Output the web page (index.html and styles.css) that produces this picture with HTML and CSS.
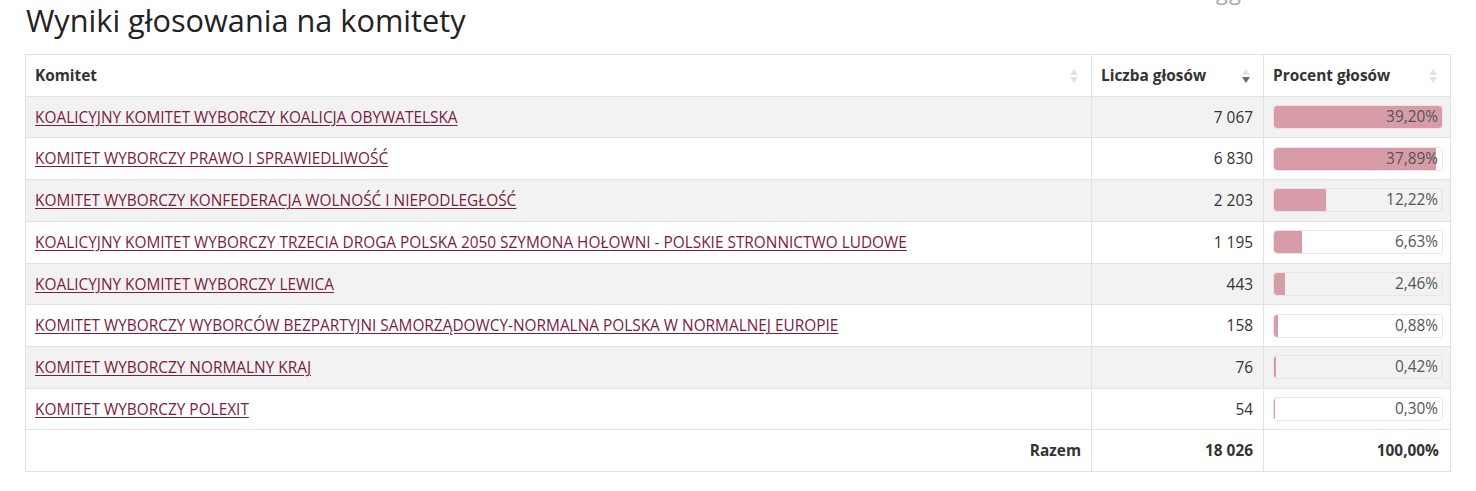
FILE: index.html
```html
<!DOCTYPE html>
<html lang="pl">
<head>
<meta charset="utf-8">
<title>Wyniki głosowania na komitety</title>
<link rel="stylesheet" href="styles.css">
</head>
<body>
<div class="page">
  <div class="ghost">gg</div>
  <h1 class="title">Wyniki głosowania na komitety</h1>
  <table class="results">
    <thead>
      <tr>
        <th class="col-name"><div class="th-in"><span>Komitet</span><svg class="sort" viewBox="0 0 8 16" width="8" height="16"><polygon points="0,7 4,1 8,7" fill="#e2e2e2"/><polygon points="0,9 4,15 8,9" fill="#e2e2e2"/></svg></div></th>
        <th class="col-votes"><div class="th-in"><span>Liczba głosów</span><svg class="sort" viewBox="0 0 8 16" width="8" height="16"><polygon points="0,7 4,1 8,7" fill="#e2e2e2"/><polygon points="0,9 4,15 8,9" fill="#6b6b6b"/></svg></div></th>
        <th class="col-pct"><div class="th-in"><span>Procent głosów</span><svg class="sort" viewBox="0 0 8 16" width="8" height="16"><polygon points="0,7 4,1 8,7" fill="#e2e2e2"/><polygon points="0,9 4,15 8,9" fill="#e2e2e2"/></svg></div></th>
      </tr>
    </thead>
    <tbody>
      <tr><td><a href="#">KOALICYJNY KOMITET WYBORCZY KOALICJA OBYWATELSKA</a></td><td class="num">7 067</td><td class="pct"><div class="bar"><div class="fill" style="width:100%"></div><span class="bar-text">39,20%</span></div></td></tr>
      <tr><td><a href="#">KOMITET WYBORCZY PRAWO I SPRAWIEDLIWOŚĆ</a></td><td class="num">6 830</td><td class="pct"><div class="bar"><div class="fill" style="width:96.66%"></div><span class="bar-text">37,89%</span></div></td></tr>
      <tr><td><a href="#">KOMITET WYBORCZY KONFEDERACJA WOLNOŚĆ I NIEPODLEGŁOŚĆ</a></td><td class="num">2 203</td><td class="pct"><div class="bar"><div class="fill" style="width:31.17%"></div><span class="bar-text">12,22%</span></div></td></tr>
      <tr><td><a href="#">KOALICYJNY KOMITET WYBORCZY TRZECIA DROGA POLSKA 2050 SZYMONA HOŁOWNI - POLSKIE STRONNICTWO LUDOWE</a></td><td class="num">1 195</td><td class="pct"><div class="bar"><div class="fill" style="width:16.91%"></div><span class="bar-text">6,63%</span></div></td></tr>
      <tr><td><a href="#">KOALICYJNY KOMITET WYBORCZY LEWICA</a></td><td class="num">443</td><td class="pct"><div class="bar"><div class="fill" style="width:6.28%"></div><span class="bar-text">2,46%</span></div></td></tr>
      <tr><td><a href="#">KOMITET WYBORCZY WYBORCÓW BEZPARTYJNI SAMORZĄDOWCY-NORMALNA POLSKA W NORMALNEJ EUROPIE</a></td><td class="num">158</td><td class="pct"><div class="bar"><div class="fill" style="width:2.24%"></div><span class="bar-text">0,88%</span></div></td></tr>
      <tr><td><a href="#">KOMITET WYBORCZY NORMALNY KRAJ</a></td><td class="num">76</td><td class="pct"><div class="bar"><div class="fill" style="width:1.07%"></div><span class="bar-text">0,42%</span></div></td></tr>
      <tr><td><a href="#">KOMITET WYBORCZY POLEXIT</a></td><td class="num">54</td><td class="pct"><div class="bar"><div class="fill" style="width:0.77%"></div><span class="bar-text">0,30%</span></div></td></tr>
    </tbody>
    <tfoot>
      <tr><td class="num strong">Razem</td><td class="num strong">18 026</td><td class="num strong total-pct">100,00%</td></tr>
    </tfoot>
  </table>
</div>
</body>
</html>
```

FILE: styles.css
```css
* { box-sizing: border-box; }
html, body { margin: 0; padding: 0; background: #fff; }
body {
  font-family: "Open Sans", "DejaVu Sans", sans-serif;
  font-size: 15.4px;
  color: #333;
}
.page {
  position: relative;
  padding: 5px 26px 0 25px;
}
.ghost {
  position: absolute;
  top: -19px;
  left: 1216px;
  font-size: 22px;
  line-height: 20px;
  color: #aaa;
  letter-spacing: 1px;
}
.title {
  margin: 0 0 18px 1px;
  font-size: 30.7px;
  font-weight: 400;
  line-height: 31px;
  color: #222;
}
.results {
  width: 1425px;
  border-collapse: collapse;
  border: 1px solid #e2e2e2;
  table-layout: fixed;
}
.results th, .results td {
  border: 1px solid #e2e2e2;
  padding: 11px 9px 9px;
  line-height: 20.7px;
  vertical-align: middle;
}
.col-name { width: 1066px; }
.col-votes { width: 172px; }
.col-pct { width: 187px; }
.results th {
  text-align: left;
  font-weight: 700;
  color: #333;
  padding-right: 13px;
}
.th-in {
  display: flex;
  align-items: center;
  justify-content: space-between;
}
.sort { display: block; margin-top: -1px; }
.results tbody tr:nth-child(odd) td { background: #f2f2f2; }
.results a {
  color: #7c1c3e;
  text-decoration: underline;
  text-underline-offset: 2px;
}
.num { text-align: right; }
.results td.num { padding-right: 10px; }
.strong { font-weight: 700; color: #333; }
.results td.pct { padding: 8px 7px 8px 9px; }
.bar {
  position: relative;
  height: 24px;
  border: 1px solid #f0e1e5;
  border-radius: 4px;
  overflow: hidden;
  display: flex;
  align-items: center;
  justify-content: flex-end;
}
.fill {
  position: absolute;
  left: 0;
  top: 0;
  bottom: 0;
  background: #d89ca9;
  border-radius: 3px 0 0 3px;
}
.bar-text {
  position: relative;
  padding-right: 4px;
  color: #555;
  line-height: 20px;
}
.results td.total-pct { padding-right: 11px; }
```
